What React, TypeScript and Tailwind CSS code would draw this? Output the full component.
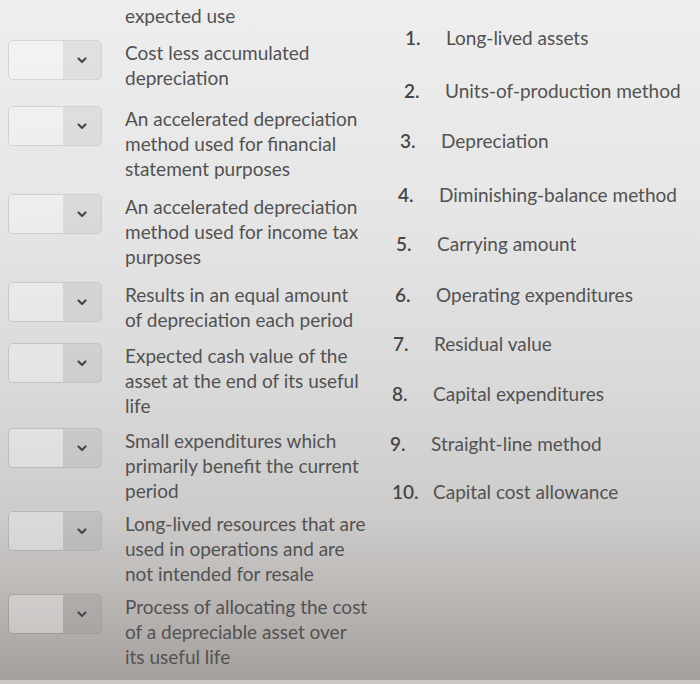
import React from "react";

type Item = { lines: string[]; gap: string };

const items: Item[] = [
  { lines: ["Cost less accumulated", "depreciation"], gap: "mt-[12px]" },
  {
    lines: ["An accelerated depreciation", "method used for financial", "statement purposes"],
    gap: "mt-[16px]",
  },
  {
    lines: ["An accelerated depreciation", "method used for income tax", "purposes"],
    gap: "mt-[13px]",
  },
  { lines: ["Results in an equal amount", "of depreciation each period"], gap: "mt-[13px]" },
  {
    lines: ["Expected cash value of the", "asset at the end of its useful", "life"],
    gap: "mt-[11px]",
  },
  {
    lines: ["Small expenditures which", "primarily benefit the current", "period"],
    gap: "mt-[10px]",
  },
  {
    lines: ["Long-lived resources that are", "used in operations and are", "not intended for resale"],
    gap: "mt-[8px]",
  },
  {
    lines: ["Process of allocating the cost", "of a depreciable asset over", "its useful life"],
    gap: "mt-[8px]",
  },
];

// offsets mimic the slight tilt of the photographed screen
const terms = [
  { n: "1.", label: "Long-lived assets", cls: "mt-[25px] ml-[35px]" },
  { n: "2.", label: "Units-of-production method", cls: "mt-[28px] ml-[34px]" },
  { n: "3.", label: "Depreciation", cls: "mt-[25px] ml-[30px]" },
  { n: "4.", label: "Diminishing-balance method", cls: "mt-[29px] ml-[28px]" },
  { n: "5.", label: "Carrying amount", cls: "mt-[24px] ml-[26px]" },
  { n: "6.", label: "Operating expenditures", cls: "mt-[26px] ml-[25px]" },
  { n: "7.", label: "Residual value", cls: "mt-[24px] ml-[23px]" },
  { n: "8.", label: "Capital expenditures", cls: "mt-[25px] ml-[22px]" },
  { n: "9.", label: "Straight-line method", cls: "mt-[25px] ml-[20px]" },
  { n: "10.", label: "Capital cost allowance", cls: "mt-[23px] ml-[22px]" },
];

const Select: React.FC = () => (
  <div className="flex h-[40px] w-[94px] shrink-0 overflow-hidden rounded-[5px] border border-black/10">
    <div className="flex-1 bg-white/30" />
    <div className="flex w-[38px] items-center justify-center bg-black/[0.05]">
      <svg width="10" height="7" viewBox="0 0 10 7" fill="none">
        <path
          d="M1.5 1.5L5 5L8.5 1.5"
          stroke="#4a4a4a"
          strokeWidth="2.2"
          strokeLinecap="round"
          strokeLinejoin="round"
        />
      </svg>
    </div>
  </div>
);

export default function App() {
  return (
    <div
      className="relative flex h-[684px] w-[700px] overflow-hidden bg-[linear-gradient(180deg,#eeeeee_0%,#e6e6e6_30%,#dadada_55%,#cdcccb_75%,#bab6b4_88%,#a5a09d_99.4%,#cdc8c4_99.5%)] text-[19px] leading-[25px] text-[#525252]"
      style={{ fontFamily: "Lato, 'Open Sans', sans-serif" }}
    >
      <div className="w-[370px] shrink-0 pl-[8px] pt-[3px]">
        <div className="pl-[117px]">expected use</div>
        {items.map((item, i) => (
          <div key={i} className={`flex items-start ${item.gap}`}>
            <Select />
            <div className="ml-[23px]">
              {item.lines.map((l, j) => (
                <div key={j} className="whitespace-nowrap">
                  {l}
                </div>
              ))}
            </div>
          </div>
        ))}
      </div>
      <div className="flex flex-col">
        {terms.map((t) => (
          <div key={t.n} className={`flex whitespace-nowrap ${t.cls}`}>
            <span className="w-[41px] shrink-0 font-semibold text-[#474747]">{t.n}</span>
            <span>{t.label}</span>
          </div>
        ))}
      </div>
    </div>
  );
}
